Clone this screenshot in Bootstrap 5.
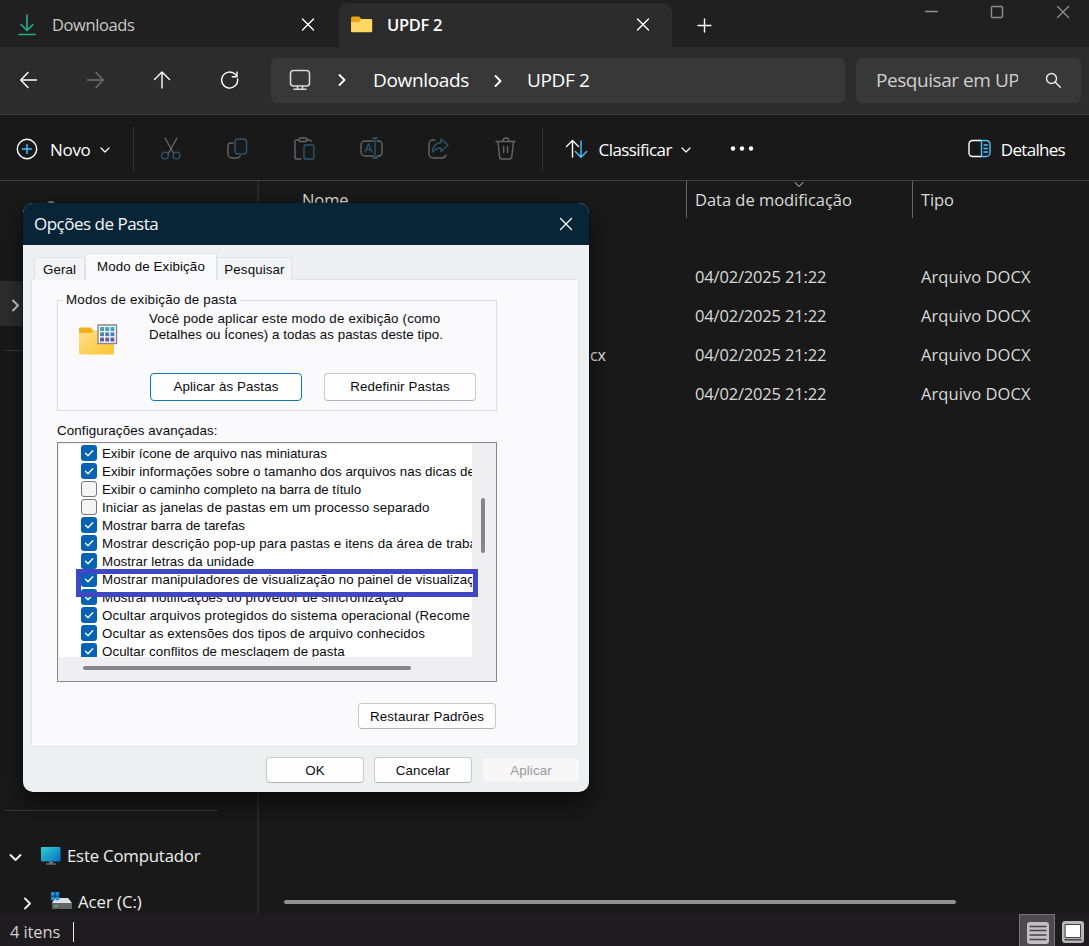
<!DOCTYPE html>
<html lang="pt-BR">
<head>
<meta charset="utf-8">
<title>UPDF 2</title>
<link href="https://cdn.jsdelivr.net/npm/bootstrap@5.3.0/dist/css/bootstrap.min.css" rel="stylesheet">
<style>
  body { width: 1089px; height: 946px; overflow: hidden; background: #191919; color: #fff; font: 16.5px/24px "Open Sans", "Noto Sans", sans-serif; letter-spacing: -.3px; white-space: nowrap; }
  svg { display: block; flex: none; fill: none; stroke: currentColor; stroke-width: 1.4; stroke-linecap: round; stroke-linejoin: round; }
  .titlebar { height: 47px; background: #202020; }
  .tab-off { width: 339px; padding: 2px 24px 0 18px; color: #c8c8c8; letter-spacing: -.4px; }
  .tab-on { width: 333px; margin-top: 3px; padding: 0 22px 1px 12px; background: #2c2c2c; border-radius: 9px 9px 0 0; font-weight: 600; }
  .win-ctl { color: #8d8d8d; gap: 52px; padding: 5px 19px 0 0; }
  .navrow { height: 68px; background: #2c2c2c; border-bottom: 1px solid #3c3c3c; padding: 0 8px 0 20px; }
  .nav-icons { width: 251px; gap: 49px; margin-top: -1px; }
  .fieldbox { height: 45px; background: #383838; border-radius: 6px; font-size: 19px; letter-spacing: -.35px; padding-bottom: 2px; }
  .addr { width: 574px; padding-left: 18px; }
  .searchbox { width: 225px; padding-left: 20px; padding-right: 19px; color: #cfcfcf; margin-left: 11px; }
  .search-txt { width: 142px; overflow: hidden; letter-spacing: -.45px; }
  .toolbar { height: 66px; border-bottom: 1px solid #414141; font-size: 17px; padding: 2px 24px 0 16px; }
  .toolbar span { padding-top: 2px; }
  .vsep { width: 1px; height: 44px; background: #333; }
  .dim { color: #666; }
  .dim .acc { stroke: #2c566c; }
  .acc { stroke: #4cc2ff; }
  .main-area { height: 733px; }
  .sidebar { width: 259px; border-right: 2px solid #292929; padding-top: 20px; }
  .side-peek { width: 8px; height: 8px; border-radius: 4px; margin: 0 0 72px 47px; background: #8a8a8a; }
  .side-sel { height: 45px; background: #2d2d2d; padding-left: 11px; }
  .side-line { height: 1px; width: 213px; margin-left: 5px; background: #3a3a3a; }
  .side-row { height: 46px; font-size: 16.8px; color: #eee; letter-spacing: -.2px; }
  .filepane { flex: 1; color: #d9d9d9; letter-spacing: -.1px; }
  .heads { height: 37px; }
  .c-name { width: 427px; padding-left: 43px; }
  .c-date { width: 226px; padding-left: 8px; }
  .c-type { padding-left: 8px; }
  .heads .c-date, .heads .c-type { border-left: 1px solid #666; }
  .heads .c-date { letter-spacing: -.03px; }
  .file { height: 39px; }
  .file .c-date, .file .c-type { padding-left: 9px; }
  .file .c-date { letter-spacing: -.17px; }
  .file .c-type { letter-spacing: .07px; }
  .file .c-name { padding-left: 331px; color: #e8e8e8; font-size: 16px; }
  .hscroll { width: 672px; height: 4px; border-radius: 2px; background: #929292; margin: 487px 0 0 25px; }
  .statusbar { height: 32px; background: #1e1c1e; color: #d4d0d4; padding-left: 10px; letter-spacing: -.1px; }
  .vbtn { width: 36px; height: 32px; background: #4c4a4c; border: 1px solid #747274; border-bottom: 0; }

  .dialogbox { position: absolute; left: 23px; top: 203px; width: 566px; height: 589px; border-radius: 10px; overflow: hidden; background: #eeeff1; color: #0a0a0c; box-shadow: 0 12px 24px rgba(0,0,0,.55), 0 0 2px #04121c; font: 13.33px/16px "Liberation Sans", Arial, sans-serif; letter-spacing: .12px; }
  .dlg-title { height: 42px; background: #082537; color: #f4f8fa; font: 17px/24px "Open Sans", sans-serif; letter-spacing: -.5px; padding: 0 16px 0 11px; }
  .dlg-tabs { height: 35px; padding: 8px 0 0 11px; position: relative; }
  .dtab { height: 23px; background: #f3f4f5; border: 1px solid #e2e3e5; border-bottom: 0; text-align: center; line-height: 22px; padding-top: 1px; }
  .dtab.cur { height: 27px; background: #fafafc; line-height: 25px; padding: 0; }
  .dpanel { margin: -1px 10px 0 8px; height: 468px; width: 548px; border: 1px solid #e3e4e6; background: #fafafc; padding: 20px 0 0 25px; }
  .dgroup { width: 440px; height: 111px; border: 1px solid #dbdcdf; position: relative; padding: 10px 0 0 20px; }
  .dlegend { position: absolute; left: 5px; top: -9px; background: #fafafc; padding: 0 3px; letter-spacing: .19px; }
  .wbtn { height: 28px; background: #fefefe; border: 1px solid #c9c9cc; border-bottom-color: #b4b4b8; border-radius: 4px; display: flex; align-items: center; justify-content: center; }
  .wbtn.low { height: 26px; padding-top: 1px; }
  .wbtn.prime { border-color: #1373bb; }
  .wbtn.off { color: #999; background: #f7f7f8; border-color: #ececee; }
  .listbox { width: 440px; height: 240px; border: 1px solid #86868a; background: #efeff1; position: relative; padding: 1px 0 0 1px; margin-top: 3px; }
  .list-view { width: 413px; height: 213px; background: #fff; overflow: hidden; padding-left: 22px; }
  .opt { height: 18px; gap: 5px; }
  .opt-label { padding-top: 1px; }
  .ck { width: 16px; height: 16px; border-radius: 3px; background: #0562b4; color: #fff; flex: none; }
  .ck.no { background: #f5f5f7; border: 1px solid #77777b; }
  .vthumb { position: absolute; left: 423px; top: 55px; width: 4px; height: 55px; border-radius: 2px; background: #868688; }
  .hthumb { position: absolute; left: 25px; top: 223px; width: 328px; height: 4px; border-radius: 2px; background: #868688; }
  .marker { position: absolute; left: 18px; top: 126px; width: 402px; height: 28px; border: 5px solid #3f47c2; }
  .dlg-btns { gap: 10px; padding: 10px 9px 0 0; }
</style>
</head>
<body>
<div class="titlebar d-flex">
  <div class="tab-off d-flex align-items-center">
    <svg width="18" height="22" viewBox="0 0 18 22" style="stroke:#27a98a;stroke-width:1.7"><path d="M9 1v15M3 10.500l6 6 6-6M1 20.500h16"/></svg>
    <span class="ms-3 flex-fill">Downloads</span>
    <svg width="14" height="14" viewBox="0 0 14 14" class="text-white"><path d="M1.500 1l11 11M12.500 1l-11 11"/></svg>
  </div>
  <div class="tab-on d-flex align-items-center">
    <svg width="22" height="18" viewBox="0 0 22 18" style="stroke:none"><path d="M0 2a1.500 1.500 0 0 1 1.500-1.500H8L10.500 3H20a1 1 0 0 1 1 1v5H0z" fill="#e9a51b"/><path d="M0 6h8l2.500-3H20a1.200 1.200 0 0 1 1.200 1.200V15a1.200 1.200 0 0 1-1.200 1.200H1.200A1.200 1.200 0 0 1 0 15z" fill="#ffd767"/></svg>
    <span class="flex-fill" style="margin-left:14px">UPDF 2</span>
    <svg width="14" height="14" viewBox="0 0 14 14"><path d="M1.500 1l11 11M12.500 1l-11 11"/></svg>
  </div>
  <div class="d-flex align-items-center flex-fill" style="padding:3px 0 0 25px"><svg width="15" height="15" viewBox="0 0 15 15" stroke-width="1.7"><path d="M7.500 1v13M1 7.500h13"/></svg></div>
  <div class="win-ctl d-flex">
    <svg width="14" height="14" viewBox="0 0 14 14" stroke-width="1"><path d="M1.500 6.500h12"/></svg>
    <svg width="14" height="14" viewBox="0 0 14 14"><rect x="1.500" y="1.500" width="11" height="11" rx="1"/></svg>
    <svg width="14" height="14" viewBox="0 0 14 14"><path d="M1.500 1.500l11 11M12.500 1.500l-11 11"/></svg>
  </div>
</div>
<div class="navrow d-flex align-items-center">
  <div class="nav-icons d-flex">
    <svg width="18" height="18" viewBox="0 0 18 18"><path d="M16.500 9H1M8 1.500L.8 9 8 16.500"/></svg>
    <svg width="18" height="18" viewBox="0 0 18 18" color="#717171"><path d="M.5 9H16M9 1.500L16.200 9 9 16.500"/></svg>
    <svg width="18" height="18" viewBox="0 0 18 18"><path d="M8 17V1M.5 8.500L8 1l7.500 7.500"/></svg>
    <svg width="18" height="18" viewBox="0 0 18 18"><path d="M16.600 8A8 8 0 1 1 14.500 3.600L16 5M16 1v4.700h-4.700"/></svg>
  </div>
  <div class="fieldbox addr d-flex align-items-center">
    <svg width="22" height="22" viewBox="0 0 22 22" color="#d6d6d6" style="stroke-width:1.6"><rect x="1.500" y="1.500" width="19" height="15.500" rx="3"/><path d="M8.500 17v3M13.500 17v3M5 20.300h12"/></svg>
    <svg width="8" height="12" viewBox="0 0 8 12" style="margin-left:27px;stroke-width:1.8"><path d="M1.500 1l5 5-5 5"/></svg>
    <span style="margin-left:27px">Downloads</span>
    <svg width="8" height="12" viewBox="0 0 8 12" style="margin-left:25px;stroke-width:1.8;margin-top:2px"><path d="M1.500 1l5 5-5 5"/></svg>
    <span style="margin-left:25px">UPDF 2</span>
  </div>
  <div class="fieldbox searchbox d-flex align-items-center justify-content-between">
    <span class="search-txt">Pesquisar em UPDF 2</span>
    <svg width="18" height="18" viewBox="0 0 18 18" color="#eee"><circle cx="7.500" cy="7.500" r="5"/><path d="M11.300 11.300l5 5"/></svg>
  </div>
</div>
<div class="toolbar d-flex align-items-center">
  <svg width="22" height="22" viewBox="0 0 22 22"><circle cx="11" cy="11" r="9.700"/><path class="acc" d="M11 6.500v9M6.500 11h9"/></svg>
  <span style="margin-left:12px">Novo</span>
  <svg width="10" height="6" viewBox="0 0 10 6" style="margin:2px 0 0 9px;stroke-width:1.200"><path d="M1 1l4 4 4-4"/></svg>
  <div class="vsep" style="margin-left:23px"></div>
  <div class="dim d-flex" style="gap:43px;margin-left:25px">
    <svg width="24" height="24" viewBox="0 0 24 24"><path d="M6 1l9 16M18 1L9 17"/><circle class="acc" cx="6" cy="18.500" r="3.400"/><circle class="acc" cx="17.500" cy="18.500" r="3.400"/></svg>
    <svg width="24" height="24" viewBox="0 0 24 24"><path d="M7 6H5a3 3 0 0 0-3 3v8a4 4 0 0 0 4 4h5a3 3 0 0 0 3-2"/><rect class="acc" x="9" y="2" width="11.500" height="15" rx="3"/></svg>
    <svg width="24" height="24" viewBox="0 0 24 24"><path d="M6 3H3.500a1.500 1.500 0 0 0-1.500 1.500v16A1.500 1.500 0 0 0 3.500 22H8M14 3h2.500A1.500 1.500 0 0 1 18 4.500"/><rect x="6" y="1" width="8" height="3.500" rx="1.500"/><rect class="acc" x="11" y="8" width="10" height="14" rx="1.500"/></svg>
    <svg width="24" height="24" viewBox="0 0 24 24"><path d="M13 4H5a4 4 0 0 0-4 4v7a4 4 0 0 0 4 4h8M17 4h1.500A3.500 3.500 0 0 1 22 7.500v8a3.500 3.500 0 0 1-3.500 3.500H17"/><path class="acc" d="M15 1v20M12.500 1h5M12.500 21h5M5 15l3.500-8 3.500 8M6.200 12.500h4.600"/></svg>
    <svg width="24" height="24" viewBox="0 0 24 24"><path d="M8 3H6a4 4 0 0 0-4 4v10a4 4 0 0 0 4 4h9a4 4 0 0 0 4-3"/><path class="acc" d="M14 2l7 6-7 6.500V11c-4 0-6 1-8.500 4C6 9 9 6 14 5.500z"/></svg>
    <svg width="24" height="24" viewBox="0 0 24 24"><path d="M2 4.500h19M9 4a3 3 0 0 1 6 0M4 4.500l1.500 15A2.500 2.500 0 0 0 8 22h7.500a2.500 2.500 0 0 0 2.300-2.500L19.500 4.500M9.700 9.500v6M13.500 9.500v6"/></svg>
  </div>
  <div class="vsep" style="margin-left:24px"></div>
  <svg width="24" height="20" viewBox="0 0 24 20" style="margin-left:22px"><path d="M7.500 18V2M1.500 7.500l6-6 6 6"/><path class="acc" d="M16 2v16M10.300 12.500l5.700 5.700 5.700-5.700"/></svg>
  <span style="margin-left:10px;letter-spacing:-.57px">Classificar</span>
  <svg width="10" height="6" viewBox="0 0 10 6" style="margin:2px 0 0 9px;stroke-width:1.200"><path d="M1 1l4 4 4-4"/></svg>
  <svg width="24" height="6" viewBox="0 0 24 6" style="margin-left:39px;fill:#fff;stroke:none"><circle cx="3" cy="2.500" r="2.200"/><circle cx="12" cy="2.500" r="2.200"/><circle cx="21" cy="2.500" r="2.200"/></svg>
  <div class="d-flex align-items-center ms-auto">
    <svg width="23" height="19" viewBox="0 0 23 19"><path d="M13 17.500H4.500a3.500 3.500 0 0 1-3.500-3.500V5a3.500 3.500 0 0 1 3.500-3.500H13"/><path class="acc" d="M13.500 1.500H18A4 4 0 0 1 22 5v9a4 4 0 0 1-4 3.500h-4.500zM16 6h3.500M16 9.500h3.500M16 13h3.500"/></svg>
    <span style="margin-left:10px;letter-spacing:-.7px">Detalhes</span>
  </div>
</div>
<div class="main-area d-flex">
  <div class="sidebar">
    <div class="side-peek"></div>
    <div class="side-sel d-flex align-items-center"><svg width="9" height="13" viewBox="0 0 9 13" style="stroke-width:1.900;color:#ccc;margin-top:3px"><path d="M2 1.500l5 5-5 5"/></svg></div>
    <div class="side-line" style="margin-top:24px"></div>
    <div class="side-line" style="margin-top:459px"></div>
    <div class="side-row d-flex align-items-center" style="margin-top:22px;padding-left:9px">
      <svg width="13" height="9" viewBox="0 0 13 9" style="stroke-width:2;margin-top:2px"><path d="M1.500 2l5 5 5-5"/></svg>
      <svg width="21" height="20" viewBox="0 0 21 20" style="margin-left:19px;stroke:none"><defs><linearGradient id="scr" x2="1" y2="1"><stop stop-color="#32d0d3"/><stop offset="1" stop-color="#086dc2"/></linearGradient></defs><rect x="0" y="1" width="19.500" height="14.500" rx=".7" fill="url(#scr)"/><path d="M8 15.500h4v2H8z" fill="#6c7a82"/><path d="M5 17.500h10v1H5z" fill="#8d979c"/></svg>
      <span style="margin-left:5px">Este Computador</span>
    </div>
    <div class="side-row d-flex align-items-center" style="padding-left:23px">
      <svg width="9" height="13" viewBox="0 0 9 13" style="stroke-width:1.900;margin-top:3px"><path d="M2 1.500l5 5-5 5"/></svg>
      <svg width="21" height="18" viewBox="0 0 21 18" style="margin-left:19px;stroke:none;margin-top:-3px"><path d="M4 6h13l4 5v6H1v-6z" fill="#dfe0e1"/><path d="M1 11h20v6H1z" fill="#626466"/><path d="M4 14h2" stroke="#4fd37b"/><path d="M0 0h3.700v3.700H0zM4.500 0h3.700v3.700H4.500zM0 4.500h3.700v3.700H0zM4.500 4.500h3.700v3.700H4.500z" fill="#1d8fe0"/></svg>
      <span style="margin-left:6px;letter-spacing:-.05px">Acer (C:)</span>
    </div>
  </div>
  <div class="filepane">
    <div class="heads d-flex align-items-center">
      <div class="c-name">Nome</div>
      <div class="c-date h-100 d-flex align-items-center position-relative">Data de modificação
        <svg class="position-absolute" width="10" height="6" viewBox="0 0 10 6" style="left:107px;top:1px;stroke-width:1"><path d="M1 .5l4 4 4-4"/></svg></div>
      <div class="c-type h-100 d-flex align-items-center">Tipo</div>
    </div>
    <div style="height:39px"></div>
    <div class="file d-flex align-items-center"><div class="c-name"></div><div class="c-date">04/02/2025 21:22</div><div class="c-type">Arquivo DOCX</div></div>
    <div class="file d-flex align-items-center"><div class="c-name"></div><div class="c-date">04/02/2025 21:22</div><div class="c-type">Arquivo DOCX</div></div>
    <div class="file d-flex align-items-center"><div class="c-name">cx</div><div class="c-date">04/02/2025 21:22</div><div class="c-type">Arquivo DOCX</div></div>
    <div class="file d-flex align-items-center"><div class="c-name"></div><div class="c-date">04/02/2025 21:22</div><div class="c-type">Arquivo DOCX</div></div>
    <div class="hscroll"></div>
  </div>
</div>
<div class="statusbar d-flex align-items-center">
  <span style="padding-top:4px">4 itens</span>
  <div style="width:1px;height:20px;background:#e8e8e8;margin:4px 0 0 13px"></div>
  <div class="d-flex ms-auto">
    <div class="vbtn d-flex justify-content-center" style="padding:7px 0 0 1px"><svg width="22" height="22" viewBox="0 0 22 22" style="stroke:none"><rect width="22" height="22" rx="3" fill="#c1bfc1"/><path d="M3 4.500h16M3 8.500h16M3 13h16M3 17.500h16" stroke="#444244" stroke-width="1.300"/></svg></div>
    <svg width="22" height="22" viewBox="0 0 22 22" style="stroke:none;margin:7px 5px 0 7px"><rect width="22" height="22" rx="3" fill="#b9b7b9"/><path d="M3.500 3.500h15v13h-15z" fill="#fff" stroke="#444244" stroke-width="1"/><path d="M3 18.800h16" stroke="#444244"/></svg>
  </div>
</div>

<div class="dialogbox">
  <div class="dlg-title d-flex align-items-center justify-content-between"><span>Opções de Pasta</span>
    <svg width="14" height="14" viewBox="0 0 14 14"><path d="M1.500 1.500l11 11M12.500 1.500l-11 11"/></svg></div>
  <div class="dlg-tabs d-flex align-items-end">
    <div class="dtab" style="width:51px">Geral</div>
    <div class="dtab cur" style="width:132px">Modo de Exibição</div>
    <div class="dtab" style="width:75px">Pesquisar</div>
  </div>
  <div class="dpanel">
    <div class="dgroup">
      <div class="dlegend">Modos de exibição de pasta</div>
      <div class="d-flex">
        <svg width="40" height="34" viewBox="0 0 40 34" style="stroke:none;margin-top:13px"><defs><linearGradient id="fol" x2="1" y2="1"><stop stop-color="#ffe08a"/><stop offset="1" stop-color="#fbc531"/></linearGradient><linearGradient id="gr" x2="0" y2="1"><stop stop-color="#36b6c4"/><stop offset="1" stop-color="#6b4fa8"/></linearGradient></defs><path d="M1 5a1.500 1.500 0 0 1 1.500-1.500h10L16 7h19v8H1z" fill="#f3af1c"/><path d="M1 9h12l3-2.500h20V29a1.500 1.500 0 0 1-1.500 1.500h-32A1.500 1.500 0 0 1 1 29z" fill="url(#fol)"/><path d="M20 1h18.500v18.500H20z" fill="#fff" stroke="#8b8489"/><path d="M22 3h4v4h-4zM27.200 3h4v4h-4zM32.400 3h4v4h-4zM22 8.200h4v4h-4zM27.200 8.200h4v4h-4zM32.400 8.200h4v4h-4zM22 13.400h4v4h-4zM27.200 13.400h4v4h-4zM32.400 13.400h4v4h-4z" fill="url(#gr)"/></svg>
        <div style="margin-left:31px"><span style="letter-spacing:.17px">Você pode aplicar este modo de exibição (como</span><br><span style="letter-spacing:.04px">Detalhes ou Ícones) a todas as pastas deste tipo.</span></div>
      </div>
      <div class="d-flex" style="gap:22px;margin:15px 0 0 72px">
        <div class="wbtn prime" style="width:152px">Aplicar às Pastas</div>
        <div class="wbtn" style="width:152px">Redefinir Pastas</div>
      </div>
    </div>
    <div style="margin-top:12px">Configurações avançadas:</div>
    <div class="listbox">
      <div class="list-view" id="opts"></div>
      <div class="vthumb"></div><div class="hthumb"></div><div class="marker"></div>
    </div>
    <div class="wbtn low" style="width:138px;margin:21px 0 0 301px">Restaurar Padrões</div>
  </div>
  <div class="dlg-btns d-flex justify-content-end">
    <div class="wbtn low" style="width:98px">OK</div>
    <div class="wbtn low" style="width:98px">Cancelar</div>
    <div class="wbtn low off" style="width:98px">Aplicar</div>
  </div>
</div>
<script src="https://cdn.jsdelivr.net/npm/bootstrap@5.3.0/dist/js/bootstrap.bundle.min.js"></script>
<script>
  // label, checked, tracking in px
  const options = [
    ["Exibir ícone de arquivo nas miniaturas", 1, -.03],
    ["Exibir informações sobre o tamanho dos arquivos nas dicas de", 1, .03],
    ["Exibir o caminho completo na barra de título", 0, -.04],
    ["Iniciar as janelas de pastas em um processo separado", 0, .1],
    ["Mostrar barra de tarefas", 1, 0],
    ["Mostrar descrição pop-up para pastas e itens da área de traba", 1, .1],
    ["Mostrar letras da unidade", 1, .04],
    ["Mostrar manipuladores de visualização no painel de visualizaç", 1, .05],
    ["Mostrar notificações do provedor de sincronização", 1, .08],
    ["Ocultar arquivos protegidos do sistema operacional (Recome", 1, .11],
    ["Ocultar as extensões dos tipos de arquivo conhecidos", 1, .07],
    ["Ocultar conflitos de mesclagem de pasta", 1, .05]
  ];
  document.getElementById("opts").innerHTML = options.map(([t, on, ls]) =>
    `<div class="opt d-flex align-items-center"><span class="ck ${on ? "" : "no"}">${on ? '<svg width="16" height="16" viewBox="0 0 16 16" stroke-width="1.2"><path d="M4.500 8.200l2.500 2.500 4.700-5"/></svg>' : ""}</span><span class="opt-label" style="letter-spacing:${ls}px">${t}</span></div>`).join("");
</script>
</body>
</html>
